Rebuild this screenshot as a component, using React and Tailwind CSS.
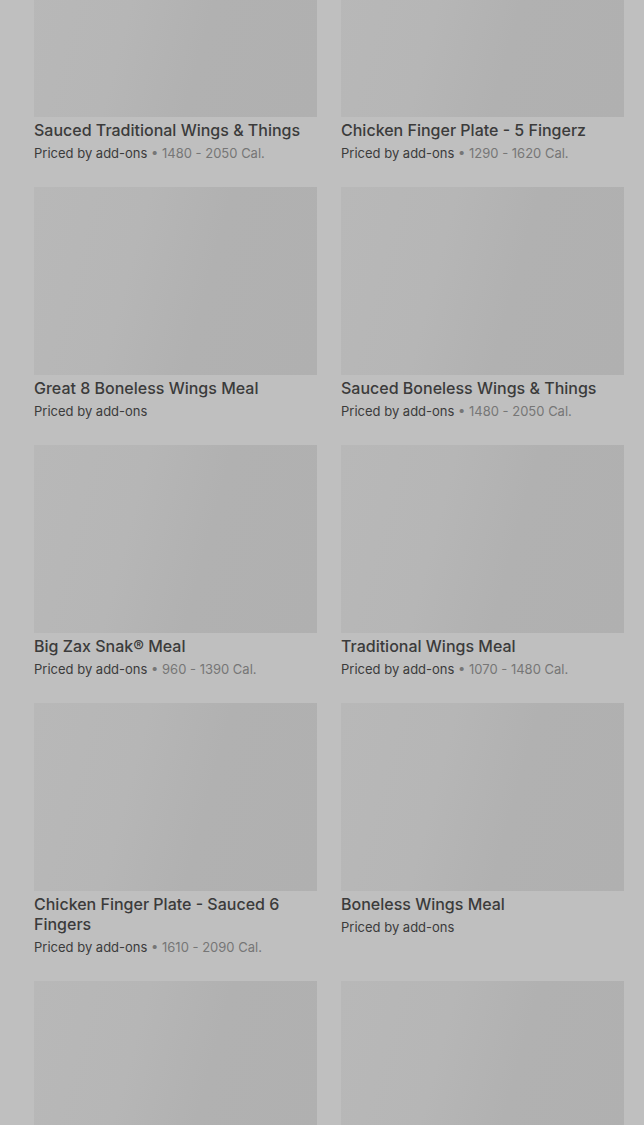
const items = [
  { name: 'Sauced Traditional Wings & Things', cal: '1480 - 2050 Cal.' },
  { name: 'Chicken Finger Plate - 5 Fingerz', cal: '1290 - 1620 Cal.' },
  { name: 'Great 8 Boneless Wings Meal', cal: null },
  { name: 'Sauced Boneless Wings & Things', cal: '1480 - 2050 Cal.' },
  { name: 'Big Zax Snak® Meal', cal: '960 - 1390 Cal.' },
  { name: 'Traditional Wings Meal', cal: '1070 - 1480 Cal.' },
  { name: 'Chicken Finger Plate - Sauced 6 Fingers', cal: '1610 - 2090 Cal.' },
  { name: 'Boneless Wings Meal', cal: null },
  { id: 'more-1' },
  { id: 'more-2' },
];

const Thumb = () => (
  <div className="h-[188px] w-full bg-[linear-gradient(105deg,#b8b8b8_0%,#b6b6b6_35%,#b1b1b1_60%,#b0b0b0_100%)]" />
);

const MenuCard = ({ item }) => (
  <div className="flex flex-col">
    <Thumb />
    {item.name && (
      <>
        <div className="mt-[3px] text-[16px] leading-[20px] font-medium text-[#3b3b3b]">{item.name}</div>
        <div className="mt-[3px] text-[13px] leading-[20px] text-[#3b3b3b]">
          Priced by add-ons
          {item.cal && <span className="text-[#767676]"> • {item.cal}</span>}
        </div>
      </>
    )}
  </div>
);

export default function App() {
  return (
    <div className="h-[1125px] w-full overflow-hidden bg-[#bfbfbf] font-['Inter',sans-serif]">
      <div className="-mt-[71px] grid grid-cols-2 gap-x-6 gap-y-6 pl-[34px] pr-[20px]">
        {items.map((it) => (
          <MenuCard key={it.name || it.id} item={it} />
        ))}
      </div>
    </div>
  );
}
